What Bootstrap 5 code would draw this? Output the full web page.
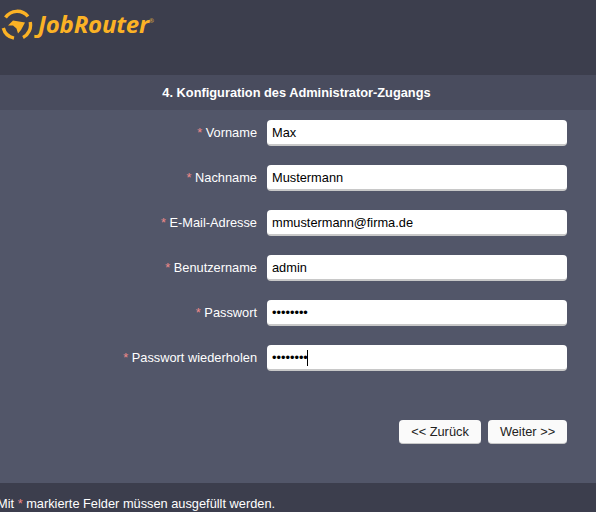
<!DOCTYPE html>
<html lang="de">
<head>
<meta charset="utf-8">
<title>JobRouter</title>
<link href="https://cdn.jsdelivr.net/npm/bootstrap@5.3.0/dist/css/bootstrap.min.css" rel="stylesheet">
<style>
html,body{height:512px;overflow:hidden}
body{background:#525669;font-family:"Liberation Sans",Arial,sans-serif;font-size:12.8px;color:#fff}
.jr-head{height:75px;background:#3c3e4d;padding:8px 0 0 1px}
.jr-mark{margin-top:1px}
.jr-brand{color:#fbb225;font-family:"Open Sans",sans-serif;font-weight:700;font-style:italic;font-size:24px;line-height:32px;margin-top:-3px;margin-left:1px;letter-spacing:-.2px}
.jr-reg{font-size:6px;vertical-align:10px;font-style:normal;color:#c9a040}
.jr-title{height:35px;background:#494c5e;font-weight:700;line-height:35px;text-align:center;padding-right:3px}
.jr-form{padding-top:10px;height:373px}
.jr-row{height:45px;padding:0 29px 0 0}
.jr-label{line-height:26px;margin-right:10px;color:#fff}
.jr-star{color:#f08a8a}
.jr-input{width:300px;height:26px;border:0;border-bottom:2px solid #c8c8c8;border-radius:4px;background:#fff;color:#000;font-family:"Liberation Sans",Arial,sans-serif;font-size:12.8px;padding:0 5px;outline:0}
.jr-caret{position:absolute;left:39.5px;top:5px;width:1px;height:16px;background:#000}
.jr-btns{padding:30px 29px 0 0;gap:7px}
.jr-btn{height:24px;border:0;border-bottom:1px solid #c8c8c8;border-radius:4px;background:#fafafa;color:#222;font-size:12.8px;line-height:22px;padding:0;text-align:center}
.jr-btn-back{width:82px}
.jr-btn-next{width:79px}
.jr-foot{height:29px;background:#3c3e4d;line-height:42px;margin-left:-3px;white-space:nowrap;overflow:hidden}
</style>
</head>
<body>
<header class="jr-head d-flex align-items-start gap-1">
<svg width="32" height="32" viewBox="0 0 32 32" class="jr-mark flex-shrink-0" aria-hidden="true">
<g fill="none" stroke="#fbb225" stroke-width="3.4">
<path d="M4.500 8.500A14 14 0 0 1 27 7.500"/>
<path d="M29.200 13A14 14 0 0 1 22 28.500"/>
<path d="M13 29.200A14 14 0 0 1 2.300 19"/>
</g>
<path fill="#fbb225" d="M7 16.500L12 11.500 24 13.500 20 21 17 24.500 15.500 19.500 12 16.500z"/>
</svg>
<div class="jr-brand">JobRouter<span class="jr-reg">®</span></div>
</header>
<div class="jr-title">4. Konfiguration des Administrator-Zugangs</div>
<main class="jr-form">
<form>
<div class="jr-row d-flex justify-content-end align-items-start"><label class="jr-label"><span class="jr-star">*</span> Vorname</label><input class="jr-input" value="Max"></div>
<div class="jr-row d-flex justify-content-end align-items-start"><label class="jr-label"><span class="jr-star">*</span> Nachname</label><input class="jr-input" value="Mustermann"></div>
<div class="jr-row d-flex justify-content-end align-items-start"><label class="jr-label"><span class="jr-star">*</span> E-Mail-Adresse</label><input class="jr-input" value="mmustermann@firma.de"></div>
<div class="jr-row d-flex justify-content-end align-items-start"><label class="jr-label"><span class="jr-star">*</span> Benutzername</label><input class="jr-input" value="admin"></div>
<div class="jr-row d-flex justify-content-end align-items-start"><label class="jr-label"><span class="jr-star">*</span> Passwort</label><input class="jr-input" type="password" value="12345678"></div>
<div class="jr-row d-flex justify-content-end align-items-start"><label class="jr-label"><span class="jr-star">*</span> Passwort wiederholen</label><div class="position-relative d-flex"><input class="jr-input" type="password" value="12345678"><span class="jr-caret"></span></div></div>
<div class="jr-btns d-flex justify-content-end"><button type="button" class="jr-btn jr-btn-back">&lt;&lt; Zurück</button><button type="button" class="jr-btn jr-btn-next">Weiter &gt;&gt;</button></div>
</form>
</main>
<footer class="jr-foot">Mit <span class="jr-star">*</span> markierte Felder müssen ausgefüllt werden.</footer>
<script src="https://cdn.jsdelivr.net/npm/bootstrap@5.3.0/dist/js/bootstrap.bundle.min.js"></script>
</body>
</html>
